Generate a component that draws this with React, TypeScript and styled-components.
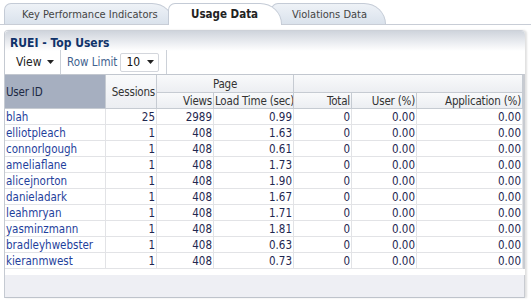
import styled, { createGlobalStyle } from "styled-components";

const GlobalStyle = createGlobalStyle`
  body {
    margin: 0;
    background: #fff;
    font-family: "DejaVu Sans Condensed", "Liberation Sans", sans-serif;
    font-size: 11px;
  }
`;

const Page = styled.div`
  width: 531px;
  height: 306px;
  overflow: hidden;
  background: #fff;
`;

const TabStrip = styled.div`
  display: flex;
  align-items: flex-end;
  height: 25px;
  box-sizing: border-box;
  padding: 3px 0 0 4px;
  border-bottom: 1px solid #c8cdd6;
`;

const Tab = styled.div<{ $active?: boolean; $width: number; $overlap: number; $indent: number }>`
  position: relative;
  z-index: ${(p) => (p.$active ? 2 : 1)};
  display: flex;
  align-items: center;
  box-sizing: border-box;
  width: ${(p) => p.$width}px;
  height: ${(p) => (p.$active ? 22 : 21)}px;
  margin-left: ${(p) => -p.$overlap}px;
  margin-bottom: ${(p) => (p.$active ? -1 : 0)}px;
  padding: 0 0 ${(p) => (p.$active ? 1 : 0)}px ${(p) => p.$indent}px;
  border: 1px solid #c4cbd6;
  border-bottom: none;
  border-radius: 7px 22px 0 0 / 7px 21px 0 0;
  background: ${(p) => (p.$active ? "#fff" : "linear-gradient(#eef2f7, #dae2ec)")};
  color: ${(p) => (p.$active ? "#222" : "#444")};
  font-weight: ${(p) => (p.$active ? "bold" : "normal")};
  font-size: ${(p) => (p.$active ? 11.5 : 11)}px;
  white-space: nowrap;
`;

const Panel = styled.div`
  margin: 5px 0 0 4px;
  width: 520px;
  border-left: 1px solid #c5cad2;
  border-top: 1px solid #cdd1d8;
  border-radius: 4px 4px 0 0;
  box-shadow: 2px 0 2px rgba(0, 0, 0, 0.12);
`;

const PanelHeader = styled.div`
  padding: 5px 0 0 5px;
  border-radius: 4px 4px 0 0;
  background: linear-gradient(#cfd4dc 0, #eceef2 12px, #fff 20px);
`;

const Title = styled.div`
  height: 14px;
  line-height: 14px;
  font-size: 12px;
  font-weight: bold;
  color: #10336a;
`;

const Toolbar = styled.div`
  display: flex;
  align-items: center;
  height: 24px;
  margin-left: -5px;
`;

const MenuButton = styled.div`
  display: flex;
  align-items: center;
  gap: 5px;
  width: 55px;
  flex-shrink: 0;
  box-sizing: border-box;
  padding-left: 11px;
  color: #222;
  font-size: 12px;
`;

const Separator = styled.div`
  align-self: stretch;
  width: 1px;
  flex-shrink: 0;
  background: #ccd1d8;
`;

const FieldLabel = styled.span`
  margin-left: 6px;
  color: #41628e;
  font-size: 11.5px;
  white-space: nowrap;
`;

const Select = styled.div`
  display: flex;
  align-items: center;
  justify-content: space-between;
  flex-shrink: 0;
  box-sizing: border-box;
  width: 39px;
  height: 19px;
  margin: 0 7px 0 3px;
  padding: 0 4px 0 5px;
  border: 1px solid #d3d6dc;
  border-radius: 2px;
  background: #fff;
  color: #111;
  font-size: 12px;
`;

const Table = styled.table`
  width: 518px;
  table-layout: fixed;
  border-collapse: separate;
  border-spacing: 0;
  border-top: 1px solid #c2c7cf;
  border-right: 2px solid #c8cbd1;
`;

const HeadCell = styled.th<{ $sorted?: boolean; $align?: "left" | "right" | "center"; $h: number }>`
  box-sizing: border-box;
  height: ${(p) => p.$h}px;
  padding: 0 1px 0 1px;
  border-right: 1px solid #c6cbd2;
  border-bottom: 1px solid #c6cbd2;
  background: ${(p) => (p.$sorted ? "#a6afc0" : "linear-gradient(#f9fafb, #eceef2)")};
  color: ${(p) => (p.$sorted ? "#1c2944" : "#333")};
  font-weight: normal;
  font-size: 11.5px;
  letter-spacing: -0.2px;
  text-align: ${(p) => p.$align ?? "right"};
  white-space: nowrap;
  overflow: hidden;
  line-height: 14px;
`;

const Cell = styled.td<{ $link?: boolean }>`
  box-sizing: border-box;
  height: 16px;
  padding: 1px 1px 0 1px;
  border-right: 1px solid #e2e3e6;
  border-bottom: 1px solid #e2e3e6;
  color: ${(p) => (p.$link ? "#1f3f9c" : "#1f2750")};
  text-align: ${(p) => (p.$link ? "left" : "right")};
  font-size: 11.5px;
  line-height: 14px;
  white-space: nowrap;
  overflow: hidden;
`;

const Footer = styled.div`
  height: 22px;
  margin-top: 6px;
  background: #eeeff4;
  border-bottom: 1px solid #bec3cb;
  border-right: 1px solid #c8cbd1;
`;

const Caret = () => (
  <svg width="7" height="4" viewBox="0 0 7 4">
    <path d="M0 0h7L3.5 4z" fill="#222" />
  </svg>
);

const rows: [string, number, number, string][] = [
  ["blah", 25, 2989, "0.99"],
  ["elliotpleach", 1, 408, "1.63"],
  ["connorlgough", 1, 408, "0.61"],
  ["ameliaflane", 1, 408, "1.73"],
  ["alicejnorton", 1, 408, "1.90"],
  ["danieladark", 1, 408, "1.67"],
  ["leahmryan", 1, 408, "1.71"],
  ["yasminzmann", 1, 408, "1.81"],
  ["bradleyhwebster", 1, 408, "0.63"],
  ["kieranmwest", 1, 408, "0.73"],
];

const widths = [101, 51, 57, 80, 58, 65, 106];

export default function App() {
  return (
    <Page>
      <GlobalStyle />
      <TabStrip>
        <Tab $width={170} $overlap={0} $indent={17}>Key Performance Indicators</Tab>
        <Tab $active $width={114} $overlap={6} $indent={22}>Usage Data</Tab>
        <Tab $width={115} $overlap={11} $indent={20}>Violations Data</Tab>
      </TabStrip>
      <Panel>
        <PanelHeader>
          <Title>RUEI - Top Users</Title>
          <Toolbar>
            <MenuButton>
              View <Caret />
            </MenuButton>
            <Separator />
            <FieldLabel>Row Limit</FieldLabel>
            <Select>
              10 <Caret />
            </Select>
            <Separator />
          </Toolbar>
        </PanelHeader>
        <Table>
          <colgroup>
            {widths.map((w, i) => (
              <col key={i} style={{ width: w }} />
            ))}
          </colgroup>
          <thead>
            <tr>
              <HeadCell rowSpan={2} $sorted $align="left" $h={18}>User ID</HeadCell>
              <HeadCell rowSpan={2} $h={18}>Sessions</HeadCell>
              <HeadCell colSpan={2} $align="center" $h={18}>Page</HeadCell>
              <HeadCell colSpan={3} $h={18} />
            </tr>
            <tr>
              <HeadCell $h={16}>Views</HeadCell>
              <HeadCell $h={16}>Load Time (sec)</HeadCell>
              <HeadCell $h={16}>Total</HeadCell>
              <HeadCell $h={16}>User (%)</HeadCell>
              <HeadCell $h={16}>Application (%)</HeadCell>
            </tr>
          </thead>
          <tbody>
            {rows.map(([user, sessions, views, load]) => (
              <tr key={user}>
                <Cell $link>{user}</Cell>
                <Cell>{sessions}</Cell>
                <Cell>{views}</Cell>
                <Cell>{load}</Cell>
                <Cell>0</Cell>
                <Cell>0.00</Cell>
                <Cell>0.00</Cell>
              </tr>
            ))}
          </tbody>
        </Table>
        <Footer />
      </Panel>
    </Page>
  );
}
